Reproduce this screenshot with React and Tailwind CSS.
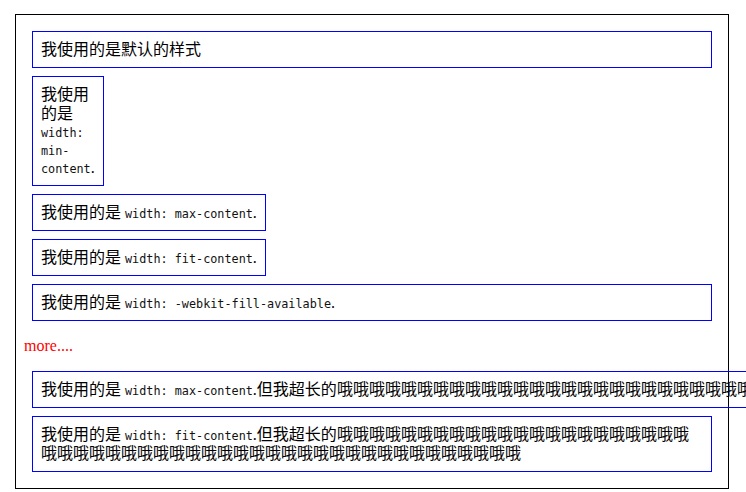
import React from "react";

const OH = "哦".repeat(52);

function Code({ children }) {
  return (
    <code className="text-[11.8px] leading-none text-[#111] [font-family:'DejaVu_Sans_Mono',monospace]">
      {children}
    </code>
  );
}

function C({ children }) {
  return <span className="leading-[19px]">{children}</span>;
}

const box = "border border-[#0000ff] p-2 m-2 leading-[18px]";

export default function App() {
  return (
    <div className="w-[746px] h-[492px] overflow-hidden bg-white text-black text-[16px] [font-family:'Liberation_Serif','Noto_Sans_CJK_SC',serif]">
      <div className="pl-[15px] pt-[14px]">
        <div className="w-[714px] border border-black p-2 leading-[18px]">
          <div className={box}>
            <C>我使用的是默认的样式</C>
          </div>
          <div className={box + " w-min"}>
            <C>我使用的是 </C>
            <Code>width: min-content</Code>.
          </div>
          <div className={box + " w-max"}>
            <C>我使用的是 </C>
            <Code>width: max-content</Code>.
          </div>
          <div className={box + " w-fit"}>
            <C>我使用的是 </C>
            <Code>width: fit-content</Code>.
          </div>
          <div className={box}>
            <C>我使用的是 </C>
            <Code>width: -webkit-fill-available</Code>.
          </div>
          <p className="my-4 leading-[18px] text-[#ff0000]">more....</p>
          <div className={box + " w-max"}>
            <C>我使用的是 </C>
            <Code>width: max-content</Code>.<C>但我超长的{OH}</C>
          </div>
          <div className={box + " w-fit"}>
            <C>我使用的是 </C>
            <Code>width: fit-content</Code>.<C>但我超长的{OH}</C>
          </div>
        </div>
      </div>
    </div>
  );
}
